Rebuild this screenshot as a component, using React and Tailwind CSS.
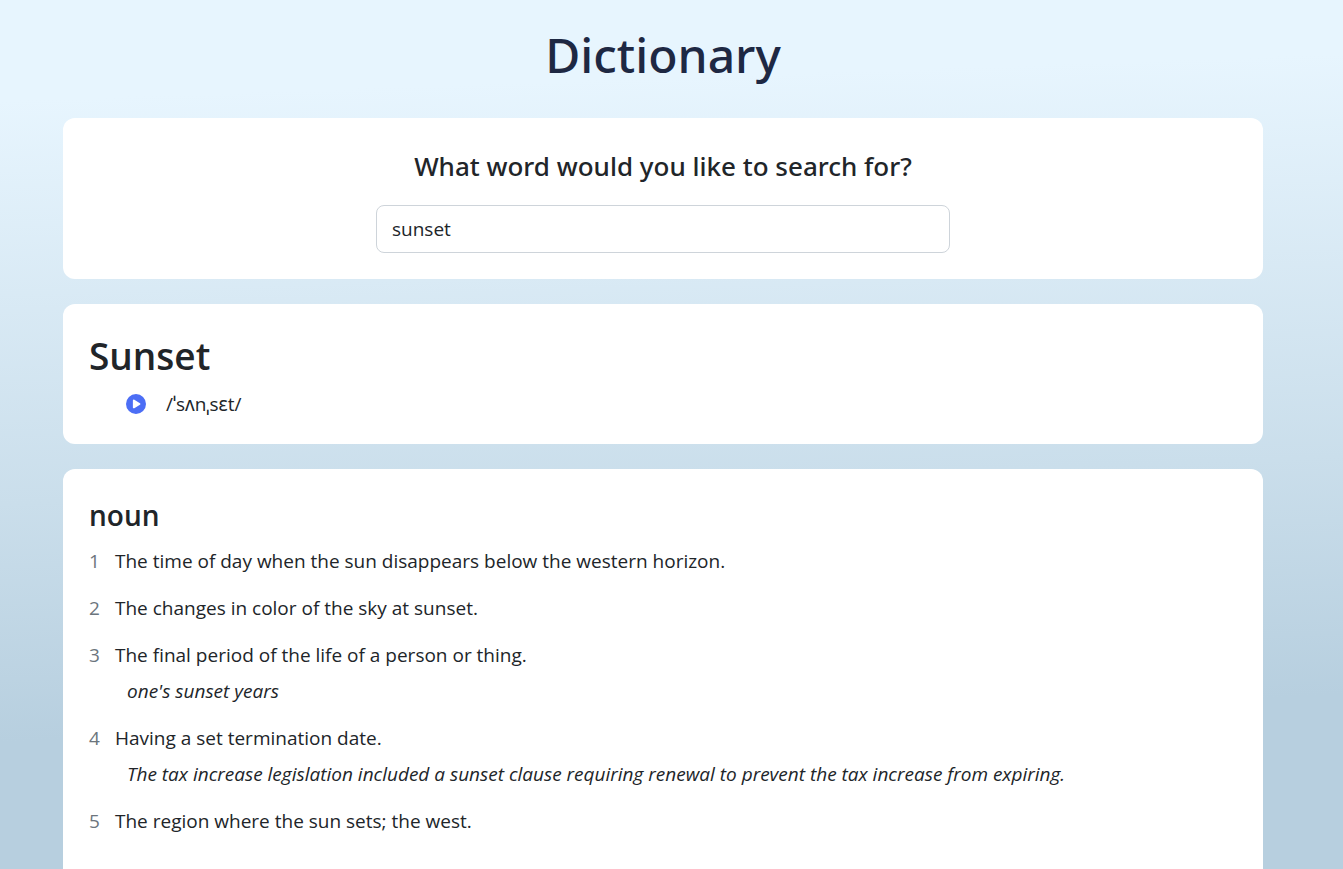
import React, { useState } from "react";

const definitions = [
  { text: "The time of day when the sun disappears below the western horizon." },
  { text: "The changes in color of the sky at sunset." },
  { text: "The final period of the life of a person or thing.", example: "one's sunset years" },
  {
    text: "Having a set termination date.",
    example:
      "The tax increase legislation included a sunset clause requiring renewal to prevent the tax increase from expiring.",
  },
  { text: "The region where the sun sets; the west." },
];

function PlayIcon() {
  return (
    <svg viewBox="0 0 512 512" className="size-5" fill="currentColor" aria-hidden="true">
      <path d="M0 256a256 256 0 1 1 512 0A256 256 0 1 1 0 256zM188.3 147.1c-7.6 4.2-12.3 12.3-12.3 20.9V344c0 8.7 4.7 16.7 12.3 20.9s16.8 4.1 24.3-.5l144-88c7.1-4.4 11.5-12.1 11.5-20.5s-4.4-16.1-11.5-20.5l-144-88c-7.4-4.5-16.7-4.7-24.3-.5z" />
    </svg>
  );
}

export default function App() {
  const [word, setWord] = useState("sunset");
  return (
    <div className="flex min-h-screen flex-col bg-[linear-gradient(178deg,#e7f5fe_11%,#cadeeb_55%,#b7cfdf_81%)] pr-[17px] font-['Open_Sans','Noto_Sans',sans-serif] text-[19px] leading-7 text-[#212529]">
      <main className="mx-auto flex w-full max-w-[1200px] flex-1 flex-col gap-[25px]">
        <h1 className="pt-5 pb-1 text-center font-['Noto_Sans',sans-serif] text-[48px] leading-[69px] font-medium text-[#1e2843]">
          Dictionary
        </h1>
        <section className="flex flex-col items-center rounded-xl bg-white px-[26px] pt-[30px] pb-[26px]">
          <label htmlFor="word" className="font-['Noto_Sans',sans-serif] text-[26px] leading-9 font-medium">
            What word would you like to search for?
          </label>
          <input
            id="word"
            type="search"
            value={word}
            onChange={(e) => setWord(e.target.value)}
            className="mt-[21px] h-12 w-1/2 rounded-lg border border-[#ced4da] bg-white px-[15px] outline-none"
          />
        </section>
        <section className="rounded-xl bg-white px-[26px] pt-7 pb-[26px]">
          <h2 className="text-[37px] leading-12 font-semibold">Sunset</h2>
          <div className="mt-2.5 flex items-center gap-5 pl-[37px]">
            <button type="button" aria-label="Play pronunciation" className="text-[#4c6ef5]">
              <PlayIcon />
            </button>
            <span>/ˈsʌnˌsɛt/</span>
          </div>
        </section>
        <section className="flex-1 rounded-t-xl bg-white px-[26px] pt-7 pb-5">
          <h3 className="text-[28px] leading-9 font-semibold">noun</h3>
          <ol className="mt-3.5 flex flex-col gap-[19px]">
            {definitions.map((d, i) => (
              <li key={d.text} className="flex">
                <span className="w-[26px] shrink-0 text-[#6c757d]">{i + 1}</span>
                <div>
                  <p>{d.text}</p>
                  {d.example && <p className="mt-2 pl-3 italic">{d.example}</p>}
                </div>
              </li>
            ))}
          </ol>
        </section>
      </main>
    </div>
  );
}
